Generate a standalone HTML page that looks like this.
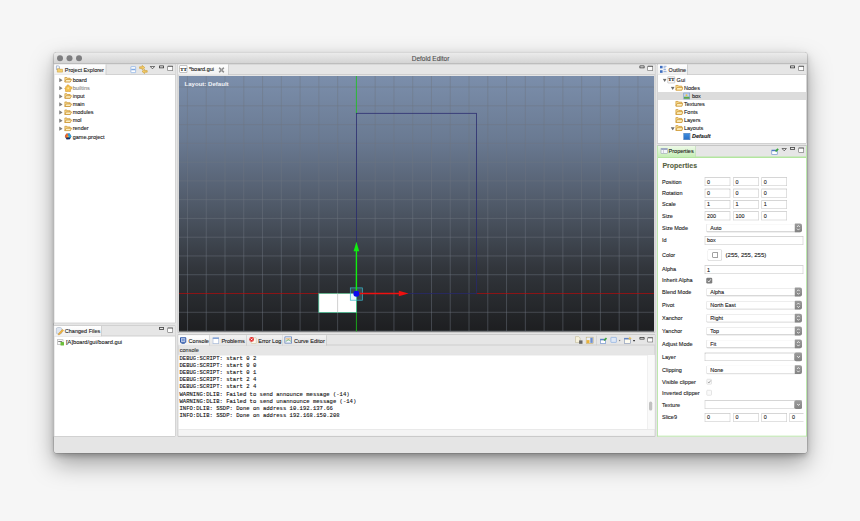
<!DOCTYPE html>
<html><head><meta charset="utf-8"><title>Defold Editor</title>
<style>
*{box-sizing:border-box;margin:0;padding:0}
html,body{width:860px;height:521px;overflow:hidden}
body{-webkit-text-stroke:0.4px currentColor;background:#f6f6f6;font-family:"Liberation Sans",sans-serif;font-size:22px;color:#1a1a1a;position:relative}
#outer{position:absolute;left:0;top:0;width:3440px;height:2084px;transform:scale(.25);transform-origin:0 0}
#inner{position:absolute;left:0;top:0;width:3440px;height:2084px}
#bg{position:absolute;left:0;top:0;width:3440px;height:2084px;background:#f6f6f6}
#win{position:absolute;left:216.4px;top:210.4px;width:3011.6px;height:1601.2px;background:#e5e5e5;border-radius:10px;box-shadow:0 44px 96px rgba(0,0,0,.34),0 0 0 2px rgba(0,0,0,.22),0 12px 32px rgba(0,0,0,.13),0 12px 16px rgba(0,0,0,.12)}
#title{position:absolute;left:216.4px;top:210.4px;width:3011.6px;height:44.8px;background:linear-gradient(#ececec,#d4d4d4);border-bottom:3.6px solid #9e9e9e;border-radius:10px 10px 0 0;text-align:center;font-size:26px;line-height:50.4px;color:#4a4a4a}
.tl{position:absolute;margin-left:-4.4px;top:10.4px;width:24px;height:24px;border-radius:50%;background:#7e7e80}
.panel{position:absolute;background:#fff;border:2.8px solid #b0b0b0}
.tabbar{position:absolute;left:0;top:0;right:0;height:40.8px;background:#e6e6e6;border-bottom:2.8px solid #b9b9b9}
.tab{position:absolute;top:0;left:0;height:40.8px;background:linear-gradient(#ffffff,#f0f0f0);border-right:2.8px solid #b9b9b9;white-space:nowrap}
.t{position:absolute;white-space:nowrap;line-height:32px;height:32px}
.a{position:absolute}
.inp{position:absolute;height:35.2px;background:#fff;border:2.4px solid #c2c2c2;border-top-color:#adadad;font-size:21.6px;line-height:31.6px;padding-left:7.2px;white-space:nowrap;overflow:hidden}
.sel{position:absolute;height:32.8px;background:#fff;border:2.4px solid #cdcdcd;border-top-color:#dcdcdc;border-bottom-color:#b2b2b2;border-radius:5.6px;font-size:21.6px;line-height:29.6px;padding-left:14.4px;white-space:nowrap;overflow:hidden;box-shadow:0 1.6px 2px rgba(0,0,0,.12)}
.lab{position:absolute;left:2648px;white-space:nowrap;line-height:32px;height:32px;font-size:22px;color:#1c1c1c}
</style></head><body>
<div id="outer"><div id="inner">
<div id="bg"></div><div id="win"></div>
<div id="title">Defold Editor<span class="tl" style="left:16px"></span><span class="tl" style="left:54px"></span><span class="tl" style="left:92px"></span></div>
<div class="panel " style="left:214.8px;top:256px;width:488.4px;height:1037.2px;">
<div class="tabbar"><div class="tab" style="width:208px"></div></div>
</div>
<svg class="a" style="left:222.4px;top:260.8px" width="30.4" height="30.4" viewBox="0 0 9 9"><path d="M1 .6 L3.6 .6 L4.6 1.8 L4.6 5 L1 5 Z" fill="#f6f8fc" stroke="#7f93b8" stroke-width=".8"/><path d="M2.2 4 L2.2 8.2 L8.3 8.2 L8.3 4.8 L5.3 4.8 L4.7 4 Z" fill="#f5d070" stroke="#c6962f" stroke-width=".6"/></svg>
<div class="t" style="left:259.2px;top:263.2px">Project Explorer</div>
<div class="a" style="left:521.6px;top:264.8px;width:22.4px;height:27.2px;border:3.2px solid #8db3e6;border-radius:3.2px;background:#fff"><div style="margin-top:7.6px;height:6px;background:#7fa9e2"></div></div>
<svg class="a" style="left:556px;top:260px" width="36" height="36" viewBox="0 0 9 9"><path d="M.6 1.8 L3.2 1.8 L3.2 .4 L5.8 2.6 L3.2 4.8 L3.2 3.4 L.6 3.4 Z" fill="#f4cc66" stroke="#c99a33" stroke-width=".6"/><path d="M8.2 5.6 L5.6 5.6 L5.6 4.2 L3 6.4 L5.6 8.6 L5.6 7.2 L8.2 7.2 Z" fill="#f4cc66" stroke="#c99a33" stroke-width=".6"/></svg>
<svg class="a" style="left:599.2px;top:264px" width="21.6" height="12.8" viewBox="0 0 5.4 3.2"><path d="M.4 .4 L5 .4 L2.7 2.8 Z" fill="#f4f4f4" stroke="#444" stroke-width=".8" stroke-linejoin="round"/></svg>
<div class="a" style="left:636.4px;top:262px;width:20px;height:10.8px;border:3.2px solid #333;border-radius:2.4px;background:#e6e6e6"></div><div class="a" style="left:669.6px;top:263.2px;width:22px;height:20px;border:2.6px solid #505050;border-top-width:4.8px;border-radius:2px;background:#fcfcfc"></div>
<svg class="a" style="left:235.6px;top:310.8px" width="15.6" height="19.2" viewBox="0 0 3.4 4.2"><path d="M.2 .2 L3.2 2.1 L.2 4 Z" fill="#7c7c7c"/></svg>
<svg class="a" style="left:256.8px;top:306.4px" width="31.2" height="24.4" viewBox="0 0 9 7"><path d="M.6 1.1 L.6 6.3 L6.8 6.3 L6.8 2 L3.6 2 L3 1.1 Z" fill="#f8dc90" stroke="#c98f2d" stroke-width=".85"/><path d="M.7 6.3 L2.1 3.4 L8.5 3.4 L6.9 6.3 Z" fill="#fdf0c4" stroke="#c98f2d" stroke-width=".85"/></svg>
<div class="t" style="left:290.8px;top:304px">board</div>
<svg class="a" style="left:235.6px;top:343.2px" width="15.6" height="19.2" viewBox="0 0 3.4 4.2"><path d="M.2 .2 L3.2 2.1 L.2 4 Z" fill="#7c7c7c"/></svg>
<svg class="a" style="left:256px;top:337.2px" width="36" height="32" viewBox="0 0 9 8"><path d="M3.4 .6 C4.6 .2 5.6 1 5.2 2.2 L7.4 2.6 C8.4 3.4 8.2 4.8 7 5 L6.4 5 L6.6 7.2 L4.6 7.4 C4.8 6.2 3.4 6.2 3.6 7.4 L1.4 7.2 L1.6 5.2 C.4 5.2 .4 3.6 1.8 3.6 L1.6 2.4 L3.2 2.2 C2.6 1.6 2.8 .9 3.4 .6 Z" fill="#f6c451" stroke="#d2922a" stroke-width=".55"/><circle cx="4.2" cy="4" r=".9" fill="#fbe29a"/></svg>
<div class="t" style="left:290.8px;top:336.4px;color:#8a8a8a">builtins</div>
<svg class="a" style="left:235.6px;top:375.6px" width="15.6" height="19.2" viewBox="0 0 3.4 4.2"><path d="M.2 .2 L3.2 2.1 L.2 4 Z" fill="#7c7c7c"/></svg>
<svg class="a" style="left:256.8px;top:371.2px" width="31.2" height="24.4" viewBox="0 0 9 7"><path d="M.6 1.1 L.6 6.3 L6.8 6.3 L6.8 2 L3.6 2 L3 1.1 Z" fill="#f8dc90" stroke="#c98f2d" stroke-width=".85"/><path d="M.7 6.3 L2.1 3.4 L8.5 3.4 L6.9 6.3 Z" fill="#fdf0c4" stroke="#c98f2d" stroke-width=".85"/></svg>
<div class="t" style="left:290.8px;top:368.8px">input</div>
<svg class="a" style="left:235.6px;top:408px" width="15.6" height="19.2" viewBox="0 0 3.4 4.2"><path d="M.2 .2 L3.2 2.1 L.2 4 Z" fill="#7c7c7c"/></svg>
<svg class="a" style="left:256.8px;top:403.6px" width="31.2" height="24.4" viewBox="0 0 9 7"><path d="M.6 1.1 L.6 6.3 L6.8 6.3 L6.8 2 L3.6 2 L3 1.1 Z" fill="#f8dc90" stroke="#c98f2d" stroke-width=".85"/><path d="M.7 6.3 L2.1 3.4 L8.5 3.4 L6.9 6.3 Z" fill="#fdf0c4" stroke="#c98f2d" stroke-width=".85"/></svg>
<div class="t" style="left:290.8px;top:401.2px">main</div>
<svg class="a" style="left:235.6px;top:440.4px" width="15.6" height="19.2" viewBox="0 0 3.4 4.2"><path d="M.2 .2 L3.2 2.1 L.2 4 Z" fill="#7c7c7c"/></svg>
<svg class="a" style="left:256.8px;top:436px" width="31.2" height="24.4" viewBox="0 0 9 7"><path d="M.6 1.1 L.6 6.3 L6.8 6.3 L6.8 2 L3.6 2 L3 1.1 Z" fill="#f8dc90" stroke="#c98f2d" stroke-width=".85"/><path d="M.7 6.3 L2.1 3.4 L8.5 3.4 L6.9 6.3 Z" fill="#fdf0c4" stroke="#c98f2d" stroke-width=".85"/></svg>
<div class="t" style="left:290.8px;top:433.6px">modules</div>
<svg class="a" style="left:235.6px;top:472.8px" width="15.6" height="19.2" viewBox="0 0 3.4 4.2"><path d="M.2 .2 L3.2 2.1 L.2 4 Z" fill="#7c7c7c"/></svg>
<svg class="a" style="left:256.8px;top:468.4px" width="31.2" height="24.4" viewBox="0 0 9 7"><path d="M.6 1.1 L.6 6.3 L6.8 6.3 L6.8 2 L3.6 2 L3 1.1 Z" fill="#f8dc90" stroke="#c98f2d" stroke-width=".85"/><path d="M.7 6.3 L2.1 3.4 L8.5 3.4 L6.9 6.3 Z" fill="#fdf0c4" stroke="#c98f2d" stroke-width=".85"/></svg>
<div class="t" style="left:290.8px;top:466px">mol</div>
<svg class="a" style="left:235.6px;top:505.2px" width="15.6" height="19.2" viewBox="0 0 3.4 4.2"><path d="M.2 .2 L3.2 2.1 L.2 4 Z" fill="#7c7c7c"/></svg>
<svg class="a" style="left:256.8px;top:500.8px" width="31.2" height="24.4" viewBox="0 0 9 7"><path d="M.6 1.1 L.6 6.3 L6.8 6.3 L6.8 2 L3.6 2 L3 1.1 Z" fill="#f8dc90" stroke="#c98f2d" stroke-width=".85"/><path d="M.7 6.3 L2.1 3.4 L8.5 3.4 L6.9 6.3 Z" fill="#fdf0c4" stroke="#c98f2d" stroke-width=".85"/></svg>
<div class="t" style="left:290.8px;top:498.4px">render</div>
<svg class="a" style="left:256.8px;top:532px" width="32" height="28.8" viewBox="0 0 9 8"><path d="M2.2 .8 L6 .6 L8 3.6 L6.4 7 L2.6 7.2 L.8 4 Z" fill="#1b2b5c"/><path d="M2.2 .8 L4.3 .7 L4.4 4.6 L1.6 5.2 L.8 4 Z" fill="#f0662a"/><path d="M4.3 .7 L6 .6 L8 3.6 L7 5.4 L4.4 4.6 Z" fill="#2fa4dd"/><path d="M3.6 3 L5 3 L5 4.8 L3.6 4.8 Z" fill="#f3c23c"/></svg>
<div class="t" style="left:290.8px;top:530.8px">game.project</div>
<div class="panel " style="left:214.8px;top:1302px;width:488.4px;height:444.4px;">
<div class="tabbar"><div class="tab" style="width:190px"></div></div>
</div>
<svg class="a" style="left:221.6px;top:1307.2px" width="36" height="36" viewBox="0 0 9 9"><path d="M.8 1.6 C.8 .4 6.2 .4 6.2 1.6 L6.2 6.4 C6.2 7.6 .8 7.6 .8 6.4 Z" fill="#dfe6f0" stroke="#9aa8bd" stroke-width=".5"/><path d="M3 6.8 L7 2.6 L8.2 3.8 L4.2 7.8 L2.8 8.2 Z" fill="#f0b43a" stroke="#c2852a" stroke-width=".4"/></svg>
<div class="t" style="left:259.2px;top:1309.6px">Changed Files</div>
<div class="a" style="left:636.4px;top:1308.4px;width:20px;height:10.8px;border:3.2px solid #333;border-radius:2.4px;background:#e6e6e6"></div><div class="a" style="left:669.6px;top:1309.6px;width:22px;height:20px;border:2.6px solid #505050;border-top-width:4.8px;border-radius:2px;background:#fcfcfc"></div>
<div class="a" style="left:228.8px;top:1357.6px;width:24px;height:21.6px;border:2.4px solid #999;background:#fafafa"><div style="margin:4px 2.4px 0;height:3.2px;background:#555"></div></div><div class="a" style="left:242.4px;top:1368px;width:13.6px;height:13.6px;background:#6cbf3a;border-radius:2.4px"></div>
<div class="t" style="left:264px;top:1352.8px;font-size:22.8px">[A]board/gui/board.gui</div>
<div class="panel " style="left:711.2px;top:256px;width:1909.6px;height:1073.6px;background:#e6e6e6">
<div class="tabbar"><div class="tab" style="width:200.8px"></div></div>
</div>
<div class="a" style="left:718.4px;top:262.4px;width:30.4px;height:28px;border:2.4px solid #8c8c8c;background:#fff;font-size:19.6px;line-height:23.6px;text-align:center;font-family:'Liberation Serif',serif;font-weight:bold;letter-spacing:-0.8px;color:#111">TT</div>
<div class="t" style="left:755.6px;top:262.4px">*board.gui</div>
<svg class="a" style="left:872px;top:265.6px" width="28" height="28" viewBox="0 0 7 7"><path d="M1.2 1.2 L5.8 5.8 M5.8 1.2 L1.2 5.8" stroke="#666" stroke-width="1.5"/><path d="M1.2 1.2 L5.8 5.8 M5.8 1.2 L1.2 5.8" stroke="#f2f2f2" stroke-width=".5"/></svg>
<div class="a" style="left:2558px;top:262px;width:20px;height:10.8px;border:3.2px solid #333;border-radius:2.4px;background:#e6e6e6"></div><div class="a" style="left:2589.6px;top:263.2px;width:22px;height:20px;border:2.6px solid #505050;border-top-width:4.8px;border-radius:2px;background:#fcfcfc"></div>
<svg class="a" style="left:716px;top:304px" width="1900" height="1022.8" viewBox="179 76 475 255.7"><defs><linearGradient id="cg" x1="0" y1="0" x2="0" y2="1"><stop offset="0" stop-color="#7b8eab"/><stop offset=".25" stop-color="#6a7a92"/><stop offset=".5" stop-color="#505a69"/><stop offset=".75" stop-color="#32363c"/><stop offset="1" stop-color="#1d1e20"/></linearGradient></defs><rect x="179" y="76" width="475" height="255.7" fill="url(#cg)"/><path d="M179 87.03H654M179 105.8H654M187.47 76V331.7M179 124.57H654M206.24 76V331.7M179 143.34H654M225.01 76V331.7M179 162.11H654M243.78 76V331.7M179 180.88H654M262.55 76V331.7M179 199.65H654M281.32 76V331.7M179 218.42H654M300.09 76V331.7M179 237.19H654M318.86 76V331.7M179 255.96H654M337.63 76V331.7M179 274.73H654M375.17 76V331.7M179 312.27H654M393.94 76V331.7M179 331.04H654M412.71 76V331.7M431.48 76V331.7M450.25 76V331.7M469.02 76V331.7M487.79 76V331.7M506.56 76V331.7M525.33 76V331.7M544.1 76V331.7M562.87 76V331.7M581.64 76V331.7M600.41 76V331.7M619.18 76V331.7M637.95 76V331.7" stroke="rgba(112,118,128,.62)" stroke-width=".75" fill="none"/><path d="M356.4 76V113.3M356.4 293.5V331.7" stroke="#19c619" stroke-width=".8"/><path d="M179 293.5H356.4M476.5 293.5H654" stroke="#b80c0c" stroke-width=".7"/><rect x="356.4" y="113.3" width="120.1" height="180.2" fill="none" stroke="#27296e" stroke-width=".75"/><rect x="318.8" y="293.5" width="37.6" height="18.9" fill="#fff" stroke="#3fbf8f" stroke-width=".7"/><path d="M337.6 293.5v18.9" stroke="#bdbdbd" stroke-width=".7"/><rect x="350.29999999999995" y="287.9" width="12.3" height="12.3" fill="rgba(120,220,235,.18)" stroke="#35b6c9" stroke-width=".7"/><path d="M356.4 293.5V250" stroke="#10ee10" stroke-width="1.4"/><path d="M356.4 241.8 L359.2 251.2 L353.59999999999997 251.2 Z" fill="#10ee10"/><path d="M356.4 293.5H400" stroke="#f01010" stroke-width="1.4"/><path d="M408.6 293.5 L398.8 290.7 L398.8 296.3 Z" fill="#f01010"/><circle cx="356.4" cy="293.8" r="3" fill="#0a0af0"/><text x="184.5" y="85.9" font-family="Liberation Sans, sans-serif" font-weight="bold" font-size="6.08" fill="#f0f2f6">Layout: Default</text></svg>
<div class="panel " style="left:711.2px;top:1338.4px;width:1909.6px;height:408px;background:#e6e6e6">
<div class="tabbar"></div>
</div>
<div class="a" style="left:713.6px;top:1340.8px;width:125.6px;height:41.6px;background:linear-gradient(#fff,#f0f0f0);border-right:2.8px solid #b9b9b9"></div>
<div class="t" style="left:754.4px;top:1348.8px;font-size:22.2px">Console</div>
<div class="a" style="left:839.2px;top:1340.8px;width:148px;height:41.6px;background:linear-gradient(#f2f2f2,#e4e4e4);border-right:2.8px solid #b9b9b9"></div>
<div class="t" style="left:885.6px;top:1348.8px;font-size:22.2px">Problems</div>
<div class="a" style="left:987.2px;top:1340.8px;width:142.4px;height:41.6px;background:linear-gradient(#f2f2f2,#e4e4e4);border-right:2.8px solid #b9b9b9"></div>
<div class="t" style="left:1032.8px;top:1348.8px;font-size:22.2px">Error Log</div>
<div class="a" style="left:1129.6px;top:1340.8px;width:177.6px;height:41.6px;background:linear-gradient(#f2f2f2,#e4e4e4);border-right:2.8px solid #b9b9b9"></div>
<div class="t" style="left:1175.6px;top:1348.8px;font-size:22.2px">Curve Editor</div>
<div class="a" style="left:720px;top:1348.8px;width:24.8px;height:22.4px;border:4px solid #2c56a8;border-radius:3.2px;background:#dfe7f5"><div style="margin:2px;height:9.6px;background:#7d9ad4"></div></div><div class="a" style="left:725.6px;top:1371.2px;width:13.6px;height:3.6px;background:#2c56a8"></div>
<div class="a" style="left:851.2px;top:1349.6px;width:24.8px;height:24px;border:2.4px solid #8aa4cf;border-top:5.6px solid #5f86c9;background:#fff"></div>
<div class="a" style="left:1004px;top:1350.4px;width:22.4px;height:24.8px;border:2px solid #c7b88a;border-radius:3.2px;background:#fbf8ee"></div><div class="a" style="left:996.8px;top:1347.6px;width:19.2px;height:19.2px;border-radius:50%;background:#e22a2a"></div><svg class="a" style="left:996.8px;top:1347.6px" width="19.2" height="19.2" viewBox="0 0 4.8 4.8"><path d="M1.5 1.5 L3.3 3.3 M3.3 1.5 L1.5 3.3" stroke="#fff" stroke-width=".8"/></svg>
<div class="a" style="left:1137.6px;top:1345.6px;width:30.4px;height:28.8px;border:3.2px solid #5f7fb8;border-radius:2.4px;background:#f3f6fb"></div><svg class="a" style="left:1137.6px;top:1345.6px" width="30.4" height="28.8" viewBox="0 0 7.6 7.2"><path d="M1.2 2.4 H6.4" stroke="#e39a3a" stroke-width=".8"/><path d="M1.2 4.6 C2.6 4.6 3 3.2 4.2 3.4 S5.4 5 6.4 4.4" stroke="#4d9a4d" stroke-width=".8" fill="none"/></svg>
<svg class="a" style="left:2298.4px;top:1344px" width="40" height="36" viewBox="0 0 10 9"><path d="M1 .6 L4.2 .6 L5.6 2 L5.6 6.6 L1 6.6 Z" fill="#f6f1dc" stroke="#b8b08a" stroke-width=".5"/><rect x="4.6" y="4.4" width="3.4" height="3.4" fill="#666"/></svg>
<svg class="a" style="left:2342.4px;top:1346.4px" width="36" height="32" viewBox="0 0 9 8"><rect x=".6" y=".6" width="7" height="6.4" fill="#e9eef8" stroke="#b59a4a" stroke-width=".5"/><rect x="4.8" y="1.2" width="2.4" height="5.2" fill="#6f8fce"/><rect x="1" y="3.6" width="3" height="3" fill="#eab23a"/></svg>
<div class="a" style="left:2385.6px;top:1342.4px;width:2.4px;height:38.4px;background:#c4c4c4"></div>
<svg class="a" style="left:2397.6px;top:1345.6px" width="36" height="32" viewBox="0 0 9 8"><rect x=".8" y="2.6" width="5.4" height="4.4" fill="#fff" stroke="#5f86c9" stroke-width=".6"/><rect x=".8" y="2.6" width="5.4" height="1.2" fill="#4f78c4"/><path d="M4 3.4 L6.4 1 L7.6 2.2 L5.2 4.4 Z" fill="#3da63d"/></svg>
<div class="a" style="left:2441.6px;top:1348px;width:25.6px;height:23.2px;border:3.2px solid #8fb0e0;border-radius:3.2px;background:#dfe8f6"></div>
<svg class="a" style="left:2474.4px;top:1359.2px" width="9.2" height="7.6" viewBox="0 0 3.8 3.2"><path d="M.2 .2 L3.6 .2 L1.9 3 Z" fill="#777"/></svg>
<svg class="a" style="left:2493.6px;top:1344px" width="36" height="36" viewBox="0 0 9 9"><rect x=".8" y="2.2" width="6" height="5.4" fill="#fdfbf0" stroke="#7c8eb0" stroke-width=".6"/><rect x=".8" y="2.2" width="6" height="1.2" fill="#4f78c4"/><path d="M6.4 .4 L7 1.8 L8.4 2.2 L7 2.8 L6.4 4.2 L5.8 2.8 L4.4 2.2 L5.8 1.8 Z" fill="#f1c04a"/></svg>
<svg class="a" style="left:2531.2px;top:1359.2px" width="10.4" height="8.4" viewBox="0 0 3.8 3.2"><path d="M.2 .2 L3.6 .2 L1.9 3 Z" fill="#222"/></svg>
<div class="a" style="left:2558px;top:1347.6px;width:20px;height:10.8px;border:3.2px solid #333;border-radius:2.4px;background:#e6e6e6"></div><div class="a" style="left:2589.6px;top:1348.8px;width:22px;height:20px;border:2.6px solid #505050;border-top-width:4.8px;border-radius:2px;background:#fcfcfc"></div>
<div class="t" style="left:719.2px;top:1386.4px;font-size:22px;color:#333">console</div>
<div class="a" style="left:714px;top:1418.8px;width:1903.6px;height:298.4px;background:#fff;border-top:2px solid #d0d0d0"></div>
<div class="a" style="left:2588.8px;top:1419.6px;width:28.8px;height:297.6px;background:#fafafa;border-left:2px solid #e4e4e4"></div>
<div class="a" style="left:2595.6px;top:1606.4px;width:13.6px;height:36px;border-radius:6.8px;background:#c1c1c1"></div>
<div class="a" style="left:714px;top:1717.2px;width:1903.6px;height:26px;background:#f4f4f4;border-top:2px solid #e0e0e0"></div>
<div class="t" style="left:718px;top:1416.8px;font-family:'Liberation Mono',monospace;font-size:22.24px;color:#111">DEBUG:SCRIPT: start 0 2</div>
<div class="t" style="left:718px;top:1445.44px;font-family:'Liberation Mono',monospace;font-size:22.24px;color:#111">DEBUG:SCRIPT: start 0 0</div>
<div class="t" style="left:718px;top:1474.12px;font-family:'Liberation Mono',monospace;font-size:22.24px;color:#111">DEBUG:SCRIPT: start 0 1</div>
<div class="t" style="left:718px;top:1502.76px;font-family:'Liberation Mono',monospace;font-size:22.24px;color:#111">DEBUG:SCRIPT: start 2 4</div>
<div class="t" style="left:718px;top:1531.4px;font-family:'Liberation Mono',monospace;font-size:22.24px;color:#111">DEBUG:SCRIPT: start 2 4</div>
<div class="t" style="left:718px;top:1560.04px;font-family:'Liberation Mono',monospace;font-size:22.24px;color:#111">WARNING:DLIB: Failed to send announce message (-14)</div>
<div class="t" style="left:718px;top:1588.72px;font-family:'Liberation Mono',monospace;font-size:22.24px;color:#111">WARNING:DLIB: Failed to send unannounce message (-14)</div>
<div class="t" style="left:718px;top:1617.36px;font-family:'Liberation Mono',monospace;font-size:22.24px;color:#111">INFO:DLIB: SSDP: Done on address 10.192.137.66</div>
<div class="t" style="left:718px;top:1646px;font-family:'Liberation Mono',monospace;font-size:22.24px;color:#111">INFO:DLIB: SSDP: Done on address 192.168.150.208</div>
<div class="panel " style="left:2629.2px;top:256px;width:597.6px;height:318.4px;">
<div class="tabbar"><div class="tab" style="width:118.4px"></div></div>
</div>
<svg class="a" style="left:2638.4px;top:260.8px" width="32" height="36" viewBox="0 0 8 9"><rect x=".5" y=".5" width="2.6" height="2.6" fill="#3f6fc0"/><rect x=".5" y="5" width="2.6" height="2.6" fill="#3f6fc0"/><path d="M4 1 H7 M4 2.6 H6 M4 4.4 H6.4 M4 6.4 H7" stroke="#5f86c9" stroke-width=".7"/></svg>
<div class="t" style="left:2674.4px;top:263.2px">Outline</div>
<div class="a" style="left:3160.4px;top:262px;width:20px;height:10.8px;border:3.2px solid #333;border-radius:2.4px;background:#e6e6e6"></div><div class="a" style="left:3194.4px;top:263.2px;width:22px;height:20px;border:2.6px solid #505050;border-top-width:4.8px;border-radius:2px;background:#fcfcfc"></div>
<div class="a" style="left:2632px;top:368px;width:592px;height:32px;background:#dcdcdc"></div>
<svg class="a" style="left:2649.6px;top:314px" width="17.6" height="14.8" viewBox="0 0 3.8 3.2"><path d="M.2 .2 L3.6 .2 L1.9 3 Z" fill="#6e6e6e"/></svg>
<div class="a" style="left:2670.4px;top:306.4px;width:29.6px;height:26.4px;border:2.4px solid #a4a4a4;border-radius:2.4px;background:#fafafa;font-size:19.2px;line-height:22px;text-align:center;font-family:'Liberation Serif',serif;font-weight:bold;letter-spacing:-0.8px;color:#111">TT</div>
<div class="t" style="left:2706.4px;top:303.2px">Gui</div>
<svg class="a" style="left:2682.4px;top:346.28px" width="17.6" height="14.8" viewBox="0 0 3.8 3.2"><path d="M.2 .2 L3.6 .2 L1.9 3 Z" fill="#6e6e6e"/></svg>
<svg class="a" style="left:2700.8px;top:337.88px" width="32" height="24.8" viewBox="0 0 9 7"><path d="M.6 1 L.6 6.4 L7.4 6.4 L7.4 1.9 L3.9 1.9 L3.2 1 Z" fill="#f9dc8c" stroke="#cb932f" stroke-width=".85"/><path d="M.8 6.4 L2 3.3 L8.5 3.3 L7.4 6.4 Z" fill="#fdefc0" stroke="#cb932f" stroke-width=".85"/></svg>
<div class="t" style="left:2736px;top:335.48px">Nodes</div>
<div class="a" style="left:2733.6px;top:370.96px;width:26.4px;height:26.4px;border:2.4px solid #6f8fc0;background:#bcd0ee"><div style="position:absolute;left:0;right:0;bottom:0;height:8.8px;background:#5aa64a"></div><div style="position:absolute;left:6.4px;top:4px;width:8px;height:8px;background:#f0c040;border-radius:50%"></div></div>
<div class="t" style="left:2768px;top:367.76px">box</div>
<svg class="a" style="left:2700.8px;top:402.44px" width="32" height="24.8" viewBox="0 0 9 7"><path d="M.6 1 L.6 6.4 L7.4 6.4 L7.4 1.9 L3.9 1.9 L3.2 1 Z" fill="#f9dc8c" stroke="#cb932f" stroke-width=".85"/><path d="M.8 6.4 L2 3.3 L8.5 3.3 L7.4 6.4 Z" fill="#fdefc0" stroke="#cb932f" stroke-width=".85"/></svg>
<div class="t" style="left:2736px;top:400.04px">Textures</div>
<svg class="a" style="left:2700.8px;top:434.72px" width="32" height="24.8" viewBox="0 0 9 7"><path d="M.6 1 L.6 6.4 L7.4 6.4 L7.4 1.9 L3.9 1.9 L3.2 1 Z" fill="#f9dc8c" stroke="#cb932f" stroke-width=".85"/><path d="M.8 6.4 L2 3.3 L8.5 3.3 L7.4 6.4 Z" fill="#fdefc0" stroke="#cb932f" stroke-width=".85"/></svg>
<div class="t" style="left:2736px;top:432.32px">Fonts</div>
<svg class="a" style="left:2700.8px;top:467px" width="32" height="24.8" viewBox="0 0 9 7"><path d="M.6 1 L.6 6.4 L7.4 6.4 L7.4 1.9 L3.9 1.9 L3.2 1 Z" fill="#f9dc8c" stroke="#cb932f" stroke-width=".85"/><path d="M.8 6.4 L2 3.3 L8.5 3.3 L7.4 6.4 Z" fill="#fdefc0" stroke="#cb932f" stroke-width=".85"/></svg>
<div class="t" style="left:2736px;top:464.6px">Layers</div>
<svg class="a" style="left:2700.8px;top:499.28px" width="32" height="24.8" viewBox="0 0 9 7"><path d="M.6 1 L.6 6.4 L7.4 6.4 L7.4 1.9 L3.9 1.9 L3.2 1 Z" fill="#f9dc8c" stroke="#cb932f" stroke-width=".85"/><path d="M.8 6.4 L2 3.3 L8.5 3.3 L7.4 6.4 Z" fill="#fdefc0" stroke="#cb932f" stroke-width=".85"/></svg>
<div class="t" style="left:2736px;top:496.88px">Layouts</div>
<svg class="a" style="left:2682.4px;top:507.68px" width="17.6" height="14.8" viewBox="0 0 3.8 3.2"><path d="M.2 .2 L3.6 .2 L1.9 3 Z" fill="#6e6e6e"/></svg>
<div class="a" style="left:2733.6px;top:531.56px;width:27.2px;height:28px;border:2.4px solid #1f5fae;background:linear-gradient(#3f8fe0,#2a6fc4)"></div>
<div class="t" style="left:2768px;top:529.16px;font-weight:bold;font-style:italic">Default</div>
<div class="panel " style="left:2629.2px;top:581.2px;width:597.6px;height:1165.2px;border-color:#a9e294;border-width:3.6px;border-top-color:#b4b4b4">
<div class="tabbar" style="border-bottom:6px solid #b3e69f;height:48px"><div class="tab" style="width:150.4px;height:42.4px;background:linear-gradient(#eefae8,#c6eeb6);border-right-color:#b3d8a5"></div></div>
</div>
<div class="a" style="left:2643.2px;top:592px;width:26.4px;height:22.4px;border:2.4px solid #8c94a8;background:#f4f6fb"><div style="height:5.2px;background:#7f8fb8"></div><div style="position:absolute;left:6.4px;top:0;bottom:0;width:2px;background:#aab"></div></div>
<div class="t" style="left:2674.4px;top:588.8px">Properties</div>
<svg class="a" style="left:3084px;top:588px" width="36" height="36" viewBox="0 0 9 9"><rect x=".8" y="3" width="5.4" height="4.6" fill="#fff" stroke="#5f86c9" stroke-width=".6"/><rect x=".8" y="3" width="5.4" height="1.2" fill="#4f78c4"/><path d="M4 4 L6.4 1.2 L7.8 2.4 L5.2 5 Z" fill="#3da63d"/></svg>
<svg class="a" style="left:3125.6px;top:591.6px" width="21.6" height="12.8" viewBox="0 0 5.4 3.2"><path d="M.4 .4 L5 .4 L2.7 2.8 Z" fill="#f4f4f4" stroke="#444" stroke-width=".8" stroke-linejoin="round"/></svg>
<div class="a" style="left:3160.4px;top:588.4px;width:20px;height:10.8px;border:3.2px solid #333;border-radius:2.4px;background:#e6e6e6"></div><div class="a" style="left:3194.4px;top:589.6px;width:22px;height:20px;border:2.6px solid #505050;border-top-width:4.8px;border-radius:2px;background:#fcfcfc"></div>
<div class="t" style="left:2649.6px;top:641.2px;font-size:28px;font-weight:bold;color:#55613f;line-height:40px;height:40px">Properties</div>
<div class="lab" style="top:710.8px">Position</div>
<div class="inp" style="left:2819.2px;top:708.8px;width:102px;">0</div>
<div class="inp" style="left:2932.8px;top:708.8px;width:102px;">0</div>
<div class="inp" style="left:3045.6px;top:708.8px;width:102px;">0</div>
<div class="lab" style="top:756.8px">Rotation</div>
<div class="inp" style="left:2819.2px;top:754.8px;width:102px;">0</div>
<div class="inp" style="left:2932.8px;top:754.8px;width:102px;">0</div>
<div class="inp" style="left:3045.6px;top:754.8px;width:102px;">0</div>
<div class="lab" style="top:802px">Scale</div>
<div class="inp" style="left:2819.2px;top:800px;width:102px;">1</div>
<div class="inp" style="left:2932.8px;top:800px;width:102px;">1</div>
<div class="inp" style="left:3045.6px;top:800px;width:102px;">1</div>
<div class="lab" style="top:848px">Size</div>
<div class="inp" style="left:2819.2px;top:846px;width:102px;">200</div>
<div class="inp" style="left:2932.8px;top:846px;width:102px;">100</div>
<div class="inp" style="left:3045.6px;top:846px;width:102px;">0</div>
<div class="lab" style="top:896px">Size Mode</div>
<div class="sel" style="left:2824.8px;top:894.8px;width:380.8px">Auto</div>
<div class="a" style="left:3179.2px;top:893.6px;width:28.8px;height:35.2px;background:linear-gradient(#9b9b9b,#828282);border-radius:2.4px 8px 8px 2.4px"></div>
<svg class="a" style="left:3184px;top:898px" width="19.2" height="26.4" viewBox="0 0 4.8 6.6"><path d="M1 2.5 L2.4 1 L3.8 2.5 M1 4.1 L2.4 5.6 L3.8 4.1" stroke="#fff" stroke-width=".75" fill="none"/></svg>
<div class="lab" style="top:945.6px">Id</div>
<div class="inp" style="left:2819.2px;top:943.6px;width:393.6px">box</div>
<div class="lab" style="top:1002.8px">Color</div>
<div class="a" style="left:2830.4px;top:996.8px;width:57.6px;height:45.6px;border:2.4px solid #c6c6c6;border-bottom-color:#b0b0b0;border-radius:6.4px;background:#fff;box-shadow:0 1.6px 2px rgba(0,0,0,.15)"></div>
<div class="a" style="left:2850.4px;top:1010.4px;width:21.6px;height:20.8px;border:2.8px solid #444;background:#fff"></div>
<div class="t" style="left:2902.4px;top:1001.6px;font-size:24px">(255, 255, 255)</div>
<div class="lab" style="top:1062px">Alpha</div>
<div class="inp" style="left:2819.2px;top:1061.2px;width:393.6px">1</div>
<div class="lab" style="top:1106px">Inherit Alpha</div>
<div class="a" style="left:2824.8px;top:1110.8px;width:24px;height:23.2px;border-radius:4.8px;background:#7d7d7d"></div><svg class="a" style="left:2824.8px;top:1110.8px" width="24" height="24" viewBox="0 0 6 6"><path d="M1.5 3 L2.6 4.3 L4.6 1.5" stroke="#fff" stroke-width=".8" fill="none"/></svg>
<div class="lab" style="top:1152.8px">Blend Mode</div>
<div class="sel" style="left:2824.8px;top:1151.6px;width:380.8px">Alpha</div>
<div class="a" style="left:3179.2px;top:1150.4px;width:28.8px;height:35.2px;background:linear-gradient(#9b9b9b,#828282);border-radius:2.4px 8px 8px 2.4px"></div>
<svg class="a" style="left:3184px;top:1154.8px" width="19.2" height="26.4" viewBox="0 0 4.8 6.6"><path d="M1 2.5 L2.4 1 L3.8 2.5 M1 4.1 L2.4 5.6 L3.8 4.1" stroke="#fff" stroke-width=".75" fill="none"/></svg>
<div class="lab" style="top:1205.6px">Pivot</div>
<div class="sel" style="left:2824.8px;top:1204.4px;width:380.8px">North East</div>
<div class="a" style="left:3179.2px;top:1203.2px;width:28.8px;height:35.2px;background:linear-gradient(#9b9b9b,#828282);border-radius:2.4px 8px 8px 2.4px"></div>
<svg class="a" style="left:3184px;top:1207.6px" width="19.2" height="26.4" viewBox="0 0 4.8 6.6"><path d="M1 2.5 L2.4 1 L3.8 2.5 M1 4.1 L2.4 5.6 L3.8 4.1" stroke="#fff" stroke-width=".75" fill="none"/></svg>
<div class="lab" style="top:1257.2px">Xanchor</div>
<div class="sel" style="left:2824.8px;top:1256px;width:380.8px">Right</div>
<div class="a" style="left:3179.2px;top:1254.8px;width:28.8px;height:35.2px;background:linear-gradient(#9b9b9b,#828282);border-radius:2.4px 8px 8px 2.4px"></div>
<svg class="a" style="left:3184px;top:1259.2px" width="19.2" height="26.4" viewBox="0 0 4.8 6.6"><path d="M1 2.5 L2.4 1 L3.8 2.5 M1 4.1 L2.4 5.6 L3.8 4.1" stroke="#fff" stroke-width=".75" fill="none"/></svg>
<div class="lab" style="top:1308.8px">Yanchor</div>
<div class="sel" style="left:2824.8px;top:1307.6px;width:380.8px">Top</div>
<div class="a" style="left:3179.2px;top:1306.4px;width:28.8px;height:35.2px;background:linear-gradient(#9b9b9b,#828282);border-radius:2.4px 8px 8px 2.4px"></div>
<svg class="a" style="left:3184px;top:1310.8px" width="19.2" height="26.4" viewBox="0 0 4.8 6.6"><path d="M1 2.5 L2.4 1 L3.8 2.5 M1 4.1 L2.4 5.6 L3.8 4.1" stroke="#fff" stroke-width=".75" fill="none"/></svg>
<div class="lab" style="top:1360.4px">Adjust Mode</div>
<div class="sel" style="left:2824.8px;top:1359.2px;width:380.8px">Fit</div>
<div class="a" style="left:3179.2px;top:1358px;width:28.8px;height:35.2px;background:linear-gradient(#9b9b9b,#828282);border-radius:2.4px 8px 8px 2.4px"></div>
<svg class="a" style="left:3184px;top:1362.4px" width="19.2" height="26.4" viewBox="0 0 4.8 6.6"><path d="M1 2.5 L2.4 1 L3.8 2.5 M1 4.1 L2.4 5.6 L3.8 4.1" stroke="#fff" stroke-width=".75" fill="none"/></svg>
<div class="lab" style="top:1412px">Layer</div>
<div class="inp" style="left:2819.2px;top:1410.8px;width:388.8px;height:33.6px"></div>
<div class="a" style="left:3176.8px;top:1410.4px;width:31.2px;height:34.4px;background:linear-gradient(#9c9c9c,#848484);border-radius:7.2px"></div>
<svg class="a" style="left:3185.6px;top:1422.4px" width="16" height="12" viewBox="0 0 4 3"><path d="M.6 .6 L2 2.2 L3.4 .6" stroke="#fff" stroke-width=".8" fill="none"/></svg>
<div class="lab" style="top:1463.6px">Clipping</div>
<div class="sel" style="left:2824.8px;top:1462.4px;width:380.8px">None</div>
<div class="a" style="left:3179.2px;top:1461.2px;width:28.8px;height:35.2px;background:linear-gradient(#9b9b9b,#828282);border-radius:2.4px 8px 8px 2.4px"></div>
<svg class="a" style="left:3184px;top:1465.6px" width="19.2" height="26.4" viewBox="0 0 4.8 6.6"><path d="M1 2.5 L2.4 1 L3.8 2.5 M1 4.1 L2.4 5.6 L3.8 4.1" stroke="#fff" stroke-width=".75" fill="none"/></svg>
<div class="lab" style="top:1511.6px">Visible clipper</div>
<div class="a" style="left:2825.6px;top:1516.4px;width:21.6px;height:21.6px;border:2px solid #cfcfcf;border-radius:4px;background:#f8f8f8"></div><svg class="a" style="left:2825.6px;top:1516.4px" width="24" height="24" viewBox="0 0 6 6"><path d="M1.4 2.9 L2.4 4 L4.2 1.5" stroke="#8a8a8a" stroke-width=".7" fill="none"/></svg>
<div class="lab" style="top:1555.8px">Inverted clipper</div>
<div class="a" style="left:2825.6px;top:1560.4px;width:21.6px;height:21.6px;border:2px solid #cfcfcf;border-radius:4px;background:#fafafa"></div>
<div class="lab" style="top:1602.8px">Texture</div>
<div class="inp" style="left:2819.2px;top:1601.6px;width:388.8px;height:33.6px"></div>
<div class="a" style="left:3176.8px;top:1601.2px;width:31.2px;height:34.4px;background:linear-gradient(#9c9c9c,#848484);border-radius:7.2px"></div>
<svg class="a" style="left:3185.6px;top:1613.2px" width="16" height="12" viewBox="0 0 4 3"><path d="M.6 .6 L2 2.2 L3.4 .6" stroke="#fff" stroke-width=".8" fill="none"/></svg>
<div class="lab" style="top:1653.6px">Slice9</div>
<div class="inp" style="left:2819.2px;top:1651.6px;width:102px;">0</div>
<div class="inp" style="left:2932.8px;top:1651.6px;width:102px;">0</div>
<div class="inp" style="left:3045.6px;top:1651.6px;width:102px;">0</div>
<div class="inp" style="left:3158.4px;top:1651.6px;width:55.2px;border-right:none;">0</div>
</div></div>
</body></html>
